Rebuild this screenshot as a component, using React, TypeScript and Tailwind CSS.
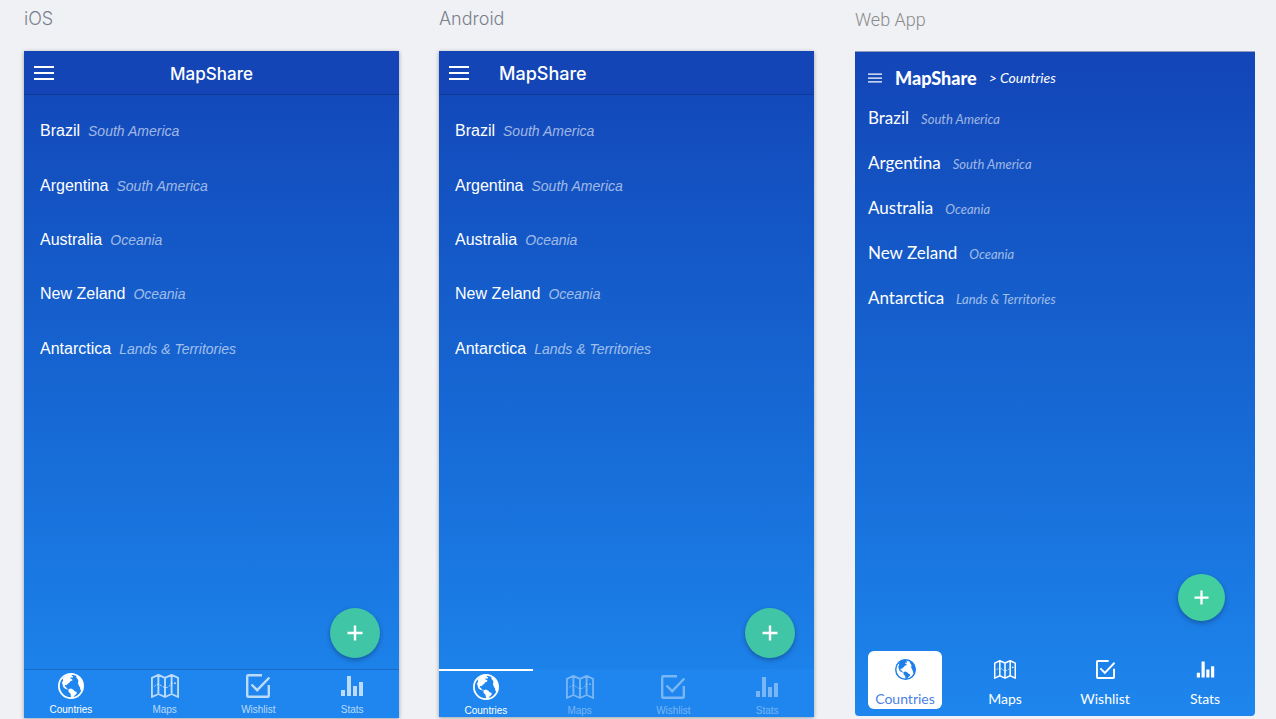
import type { ReactNode } from "react";
import { clsx } from "clsx";

type IconProps = { className?: string };

const countries = [
  { name: "Brazil", region: "South America" },
  { name: "Argentina", region: "South America" },
  { name: "Australia", region: "Oceania" },
  { name: "New Zeland", region: "Oceania" },
  { name: "Antarctica", region: "Lands & Territories" },
];

function GlobeIcon({ className }: IconProps) {
  return (
    <svg viewBox="0 0 26 26" className={className} fill="currentColor" aria-hidden="true">
      <circle cx="13" cy="13" r="12.1" fill="none" stroke="currentColor" strokeWidth="1.8" />
      <path d="M4.600 5.600 7.600 2.600 11.400 1 14.200 1.400 13.600 2.600 15.200 3.400 14.400 4.800 12.600 4.200 12.200 5.200 14.200 6.200 14.400 7.600 12.400 8.200 11 10 9.200 11.200 9 12.600 8.200 11.800 6.900 12.200 6.800 13.800 8.200 13.800 8.400 15.200 10.200 16 9.400 16.600 7.200 15.800 5.400 14.200 4.600 11.800 4 9.400 5.200 7.400Z" />
      <path d="M10.400 16.200 13 15.600 15.400 16.800 16.600 18.200 18.800 19 18.400 21 16.600 22.400 15.200 24.600 13.400 25 12.800 22.600 12.400 20.600 10.600 19Z" />
      <path d="M18.400 2.600 21.400 4.200 23.800 7 25.200 10.600 25.200 14.800 24 18.400 22.400 16.800 22 14.400 20.800 12.400 20 10.200 20.400 8 19.800 6.200 18.400 4.800Z" />
    </svg>
  );
}

function MapIcon({ className }: IconProps) {
  return (
    <svg viewBox="0 0 28 24" className={className} fill="none" stroke="currentColor" aria-hidden="true">
      <path
        strokeWidth="1.9"
        strokeLinejoin="round"
        d="M.9 3.800 7.400.9 14 3.800 20.600.9 27.100 3.800V23L20.600 20 14 23 7.400 20 .9 23ZM7.400.9V20M14 3.800V23M20.600.9V20"
      />
      <path strokeWidth="1" strokeDasharray="2 1.200" d="M3.500 12.500C5.500 9.500 8 10 10 11.500S14 14.500 17 13s1.500-3.500 4.500-4" />
      <path strokeWidth="1.500" d="M23 9.200h2" />
    </svg>
  );
}

function CheckIcon({ className }: IconProps) {
  return (
    <svg viewBox="0 0 24 24" className={className} fill="none" stroke="currentColor" strokeWidth="2.400" aria-hidden="true">
      <path strokeLinejoin="round" d="M16 1.200H2.200Q1.200 1.200 1.200 2.200V21.800Q1.200 22.800 2.200 22.800H21.800Q22.800 22.800 22.800 21.800V11" />
      <path d="M5.500 10.500 11.200 16.200 23.400 3.500" />
    </svg>
  );
}

function StatsIcon({ className }: IconProps) {
  return (
    <svg viewBox="0 0 24 24" className={className} fill="currentColor" aria-hidden="true">
      <path d="M1 16h4v6H1zM7 2h4v20H7zM13 12h4v10h-4zM19 8h4v14h-4z" />
    </svg>
  );
}

function PlusIcon({ className }: IconProps) {
  return (
    <svg viewBox="0 0 16 16" className={className} fill="none" stroke="currentColor" strokeWidth="2.400" aria-hidden="true">
      <path d="M8 .5v15M.5 8h15" />
    </svg>
  );
}

function MenuIcon({ className }: IconProps) {
  return (
    <svg viewBox="0 0 20 14" className={className} fill="currentColor" aria-hidden="true">
      <path d="M0 0h20v2H0zM0 6h20v2H0zM0 12h20v2H0z" />
    </svg>
  );
}

const tabs = [
  { label: "Countries", Icon: GlobeIcon },
  { label: "Maps", Icon: MapIcon },
  { label: "Wishlist", Icon: CheckIcon },
  { label: "Stats", Icon: StatsIcon },
];

function Preview({ title, titleClass, children }: { title: string; titleClass: string; children: ReactNode }) {
  return (
    <section className="flex min-w-0 flex-col">
      <h2 className={clsx("flex h-[51px] shrink-0 items-start text-lg leading-6 font-light", titleClass)}>{title}</h2>
      {children}
    </section>
  );
}

function PhoneScreen({ android = false }: { android?: boolean }) {
  return (
    <div
      className={clsx(
        "flex flex-1 flex-col bg-linear-to-b from-[#1345b7] to-[#1e86ee] text-white shadow-[0_1px_4px_rgba(0,0,0,0.35)]",
        android ? "mb-0.5" : "mb-px",
      )}
    >
      <header className="grid h-11 shrink-0 grid-cols-[60px_1fr_60px] items-center border-b border-[#103a95] bg-[#1345b7]">
        <button type="button" aria-label="Menu" className="flex h-full items-center pl-2.5">
          <MenuIcon className="h-3.5 w-5" />
        </button>
        <h3
          className={clsx(
            "pt-0.5 font-['Inter',sans-serif] leading-6 font-medium",
            android ? "text-lg" : "text-center text-[17px]",
          )}
        >
          MapShare
        </h3>
      </header>

      <main className="flex flex-1 flex-col pt-[9px]">
        <ul className="flex h-[272px] flex-col">
          {countries.map((c) => (
            <li key={c.name} className="flex flex-1 items-center px-4">
              <div className="flex items-baseline gap-2">
                <span className="text-base">{c.name}</span>
                <span className="text-sm text-white/60 italic">{c.region}</span>
              </div>
            </li>
          ))}
        </ul>
        <button
          type="button"
          aria-label="Add country"
          className="mt-auto mr-[19px] mb-[11px] flex size-[50px] items-center justify-center self-end rounded-full bg-[#40c6a6] shadow-[0_2px_5px_rgba(0,0,0,0.3)]"
        >
          <PlusIcon className="size-4" />
        </button>
      </main>

      <nav
        className={clsx(
          "grid shrink-0 grid-cols-4 bg-[#1e86ee]",
          android ? "h-12" : "h-[49px] border-t border-[#176bc9]",
        )}
      >
        {tabs.map(({ label, Icon }, i) => (
          <button
            key={label}
            type="button"
            className={clsx(
              "flex flex-col items-center pt-[3px] text-[10px] leading-3",
              android && (i === 0 ? "border-t-2 border-white" : "border-t-2 border-transparent"),
              i > 0 && (android ? "text-white/40" : "text-white/70"),
            )}
          >
            <span className="flex h-[26px] items-center">
              <Icon className={clsx(i === 0 ? "size-[26px]" : i === 1 ? "h-6 w-7" : "size-6")} />
            </span>
            <span className="mt-[5px]">{label}</span>
          </button>
        ))}
      </nav>
    </div>
  );
}

function WebScreen() {
  return (
    <div className="mb-[3px] ml-px flex flex-1 flex-col rounded-b border-t border-[#8f9cc0] bg-linear-to-b from-[#1345b7] to-[#1e86ee] font-['Lato',sans-serif] text-white [font-variant-ligatures:none]">
      <header className="flex shrink-0 items-center px-[13px] pt-3">
        <button type="button" aria-label="Menu" className="mr-[13px]">
          <svg viewBox="0 0 14 10" className="h-2.5 w-3.5" fill="currentColor" aria-hidden="true">
            <path d="M0 .5h14v1.300H0zM0 4.400h14v1.300H0zM0 8.200h14v1.300H0z" />
          </svg>
        </button>
        <div className="flex items-center gap-3">
          <h3 className="text-lg leading-7 font-black">MapShare</h3>
          <span className="text-sm leading-7 italic">&gt; Countries</span>
        </div>
      </header>

      <main className="flex flex-1 flex-col">
        <ul className="pt-2">
          {countries.map((c) => (
            <li key={c.name} className="flex h-[45px] items-baseline gap-3 px-[13px] pt-1.5">
              <span className="text-[17px] leading-6">{c.name}</span>
              <span className="text-[13px] leading-6 text-white/60 italic">{c.region}</span>
            </li>
          ))}
        </ul>
        <button
          type="button"
          aria-label="Add country"
          className="mt-auto mr-[30px] mb-[30px] flex size-[47px] items-center justify-center self-end rounded-full bg-[#42ce9f] shadow-[0_2px_5px_rgba(0,0,0,0.3)]"
        >
          <PlusIcon className="size-[15px]" />
        </button>
      </main>

      <nav className="mb-[7px] grid shrink-0 grid-cols-4">
        {tabs.map(({ label, Icon }, i) => (
          <button
            key={label}
            type="button"
            className={clsx(
              "mx-[13px] flex h-[58px] flex-col items-center rounded-md pt-2 text-sm leading-5",
              i === 0 && "bg-white text-[#1d7fe9]",
            )}
          >
            <span className="flex h-[21px] items-center">
              <Icon className={clsx(i === 0 ? "size-[21px]" : i === 1 ? "h-[19px] w-[22px]" : "size-[19px]")} />
            </span>
            <span className={clsx("mt-[9px]", i === 0 && "text-[#4a82e4]")}>{label}</span>
          </button>
        ))}
      </nav>
    </div>
  );
}

export default function App() {
  return (
    <div className="grid min-h-screen grid-cols-[375fr_375fr_401fr] gap-10 bg-[#eff1f5] pr-[21px] pl-6 font-['Liberation_Sans',Arial,sans-serif]">
      <Preview title="iOS" titleClass="pt-[7px] font-['Inter',sans-serif] text-[#7b7f8c]">
        <PhoneScreen />
      </Preview>
      <Preview title="Android" titleClass="pt-[7px] font-['Inter',sans-serif] text-[#7b7f8c]">
        <PhoneScreen android />
      </Preview>
      <Preview title="Web App" titleClass="pt-2 pl-px font-['Roboto',sans-serif] text-[#8a8a8a]">
        <WebScreen />
      </Preview>
    </div>
  );
}
